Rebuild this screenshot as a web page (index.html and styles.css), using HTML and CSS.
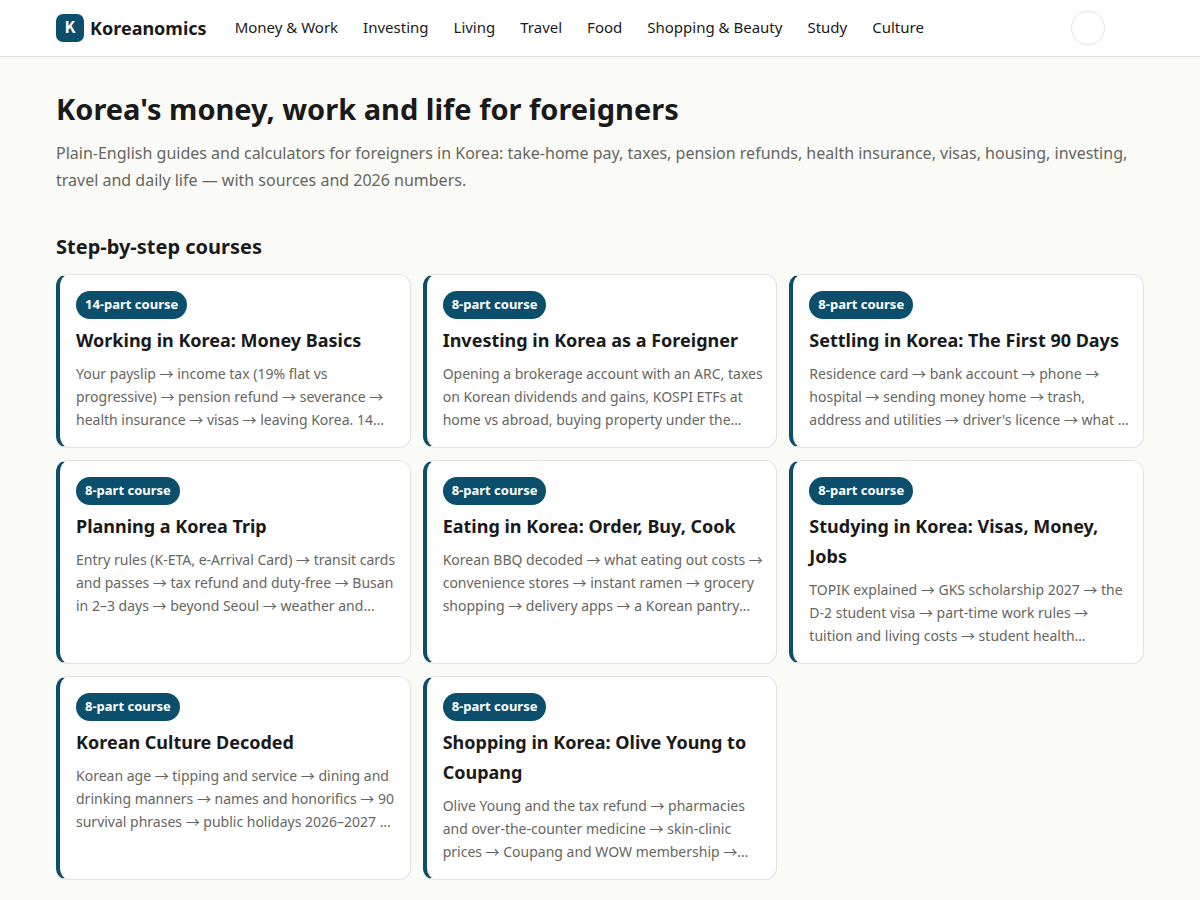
FILE: index.html
```html
<!DOCTYPE html>
<html lang="en">
<head>
    <meta charset="UTF-8">
    <meta name="viewport" content="width=device-width, initial-scale=1.0">
    <title>Koreanomics</title>
    <link rel="stylesheet" href="styles.css">
</head>
<body>
    <!-- Header -->
    <header class="site-header">
        <div class="wrap header-inner">
            <a class="brand" href="#">
                <svg class="brand-mark" viewBox="0 0 28 28" aria-hidden="true">
                    <rect width="28" height="28" rx="7" fill="#0b4f6c"/>
                    <text x="14" y="19" text-anchor="middle" fill="#fff">K</text>
                </svg>
                <span>Koreanomics</span>
            </a>
            <nav class="nav">
                <a href="#">Money &amp; Work</a>
                <a href="#">Investing</a>
                <a href="#">Living</a>
                <a href="#">Travel</a>
                <a href="#">Food</a>
                <a href="#">Shopping &amp; Beauty</a>
                <a href="#">Study</a>
                <a href="#">Culture</a>
            </nav>
            <button class="theme-btn" type="button" aria-label="Toggle theme"></button>
        </div>
    </header>

    <main class="wrap">
        <!-- Intro -->
        <section class="hero">
            <h1>Korea's money, work and life for foreigners</h1>
            <p>Plain-English guides and calculators for foreigners in Korea: take-home pay, taxes, pension refunds, health insurance, visas, housing, investing, travel and daily life — with sources and 2026 numbers.</p>
        </section>

        <!-- Courses -->
        <h2 class="section-title">Step-by-step courses</h2>
        <div class="grid">
            <a class="card" href="#">
                <span class="badge">14-part course</span>
                <h3>Working in Korea: Money Basics</h3>
                <p>Your payslip → income tax (19% flat vs progressive) → pension refund → severance → health insurance → visas → leaving Korea. 14…</p>
            </a>
            <a class="card" href="#">
                <span class="badge">8-part course</span>
                <h3>Investing in Korea as a Foreigner</h3>
                <p>Opening a brokerage account with an ARC, taxes on Korean dividends and gains, KOSPI ETFs at home vs abroad, buying property under the…</p>
            </a>
            <a class="card" href="#">
                <span class="badge">8-part course</span>
                <h3>Settling in Korea: The First 90 Days</h3>
                <p>Residence card → bank account → phone → hospital → sending money home → trash, address and utilities → driver's licence → what …</p>
            </a>
            <a class="card" href="#">
                <span class="badge">8-part course</span>
                <h3>Planning a Korea Trip</h3>
                <p>Entry rules (K-ETA, e-Arrival Card) → transit cards and passes → tax refund and duty-free → Busan in 2–3 days → beyond Seoul → weather and…</p>
            </a>
            <a class="card" href="#">
                <span class="badge">8-part course</span>
                <h3>Eating in Korea: Order, Buy, Cook</h3>
                <p>Korean BBQ decoded → what eating out costs → convenience stores → instant ramen → grocery shopping → delivery apps → a Korean pantry…</p>
            </a>
            <a class="card" href="#">
                <span class="badge">8-part course</span>
                <h3>Studying in Korea: Visas, Money, Jobs</h3>
                <p>TOPIK explained → GKS scholarship 2027 → the D-2 student visa → part-time work rules → tuition and living costs → student health…</p>
            </a>
            <a class="card" href="#">
                <span class="badge">8-part course</span>
                <h3>Korean Culture Decoded</h3>
                <p>Korean age → tipping and service → dining and drinking manners → names and honorifics → 90 survival phrases → public holidays 2026–2027 …</p>
            </a>
            <a class="card" href="#">
                <span class="badge">8-part course</span>
                <h3>Shopping in Korea: Olive Young to Coupang</h3>
                <p>Olive Young and the tax refund → pharmacies and over-the-counter medicine → skin-clinic prices → Coupang and WOW membership →…</p>
            </a>
        </div>
    </main>
</body>
</html>
```
FILE: styles.css
```css
* { box-sizing: border-box; }
body { margin: 0; font-family: "Noto Sans", "Noto Sans CJK KR", sans-serif; font-size: 16px; line-height: 27px; color: #1a1a1a; background: #fafaf7; }
a { color: inherit; text-decoration: none; }
h1, h2, h3, p { margin: 0; }

.wrap { max-width: 1120px; margin: 0 auto; padding: 0 16px; }

/* header */
.site-header { background: #fff; border-bottom: 1px solid #e3e3de; }
.header-inner { display: flex; align-items: center; min-height: 56px; }
.brand { display: flex; align-items: center; gap: 6px; font-size: 18px; font-weight: 700; }
.brand-mark { width: 28px; height: 28px; }
.brand-mark text { font-family: "Noto Sans CJK KR", sans-serif; font-size: 16px; font-weight: 700; }
.nav { display: flex; gap: 25px; margin-left: 28px; padding-bottom: 2px; font-size: 15px; line-height: 26px; }
.theme-btn { width: 34px; height: 34px; margin-left: auto; margin-right: 39px; padding: 0; border: 1px solid #e3e3de; border-radius: 50%; background: none; cursor: pointer; }

/* intro */
.hero { padding: 32px 0 36px; }
.hero h1 { font-size: 29px; line-height: 40px; margin-bottom: 11px; }
.hero p { color: #666660; }

.section-title { font-size: 20px; line-height: 34px; margin-bottom: 10px; }

/* course cards */
.grid { display: grid; grid-template-columns: repeat(auto-fill, minmax(300px, 1fr)); gap: 12px; padding-bottom: 40px; }
.card { display: flex; flex-direction: column; align-items: flex-start; padding: 16px 12px 16px 16px; background: #fff; border: 1px solid #e3e3de; border-left: 4px solid #0b4f6c; border-radius: 12px; }
.badge { padding: 2px 9px 4px; border-radius: 999px; background: #0b4f6c; color: #fff; font-size: 13px; line-height: 22px; font-weight: 700; }
.card h3 { font-size: 18px; line-height: 30px; margin: 6px 0 7px; }
.card p { font-size: 14px; line-height: 23px; color: #666660; }
```
